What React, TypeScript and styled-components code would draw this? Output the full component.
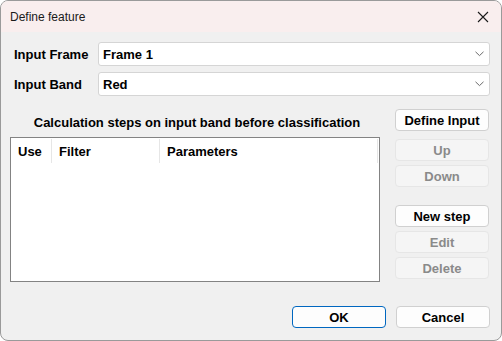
import styled, { createGlobalStyle } from "styled-components";

const GlobalStyle = createGlobalStyle`
  html, body {
    margin: 0;
    padding: 0;
    background: #ffffff;
  }
  * {
    box-sizing: border-box;
  }
`;

const columns = [
  { title: "Use", width: 41 },
  { title: "Filter", width: 108 },
  { title: "Parameters", width: 218 },
];

function Chevron() {
  return (
    <svg width="9" height="6" viewBox="0 0 9 6">
      <path d="M0.5 0.8 L4.5 4.6 L8.5 0.8" fill="none" stroke="#6a6a6a" strokeWidth="1" />
    </svg>
  );
}

function CloseIcon() {
  return (
    <svg width="12" height="12" viewBox="0 0 12 12">
      <path d="M1 1 L11 11 M11 1 L1 11" stroke="#1a1a1a" strokeWidth="1.1" fill="none" />
    </svg>
  );
}

export default function App() {
  return (
    <>
      <GlobalStyle />
      <Window>
        <TitleBar>
          <Title>Define feature</Title>
          <CloseButton>
            <CloseIcon />
          </CloseButton>
        </TitleBar>

        <Body>
          <FieldRow>
            <Label>Input Frame</Label>
            <Combo>
              <ComboText>Frame 1</ComboText>
              <Chevron />
            </Combo>
          </FieldRow>
          <FieldRow>
            <Label>Input Band</Label>
            <Combo>
              <ComboText>Red</ComboText>
              <Chevron />
            </Combo>
          </FieldRow>

          <Main>
            <StepsColumn>
              <Heading>Calculation steps on input band before classification</Heading>
              <ListBox>
                <HeaderRow>
                  {columns.map((c) => (
                    <HeaderCell key={c.title} style={{ width: c.width }}>
                      {c.title}
                    </HeaderCell>
                  ))}
                </HeaderRow>
              </ListBox>
            </StepsColumn>

            <ButtonColumn>
              <Button>Define Input</Button>
              <ButtonGroup>
                <Button disabled>Up</Button>
                <Button disabled>Down</Button>
              </ButtonGroup>
              <ButtonGroup $top={18}>
                <Button>New step</Button>
                <Button disabled>Edit</Button>
                <Button disabled>Delete</Button>
              </ButtonGroup>
            </ButtonColumn>
          </Main>

          <Footer>
            <Button $primary>OK</Button>
            <Button>Cancel</Button>
          </Footer>
        </Body>
      </Window>
    </>
  );
}

const Window = styled.div`
  width: 502px;
  height: 341px;
  display: flex;
  flex-direction: column;
  background: #f0f0f0;
  border: 1px solid #9a9a9a;
  border-radius: 8px;
  overflow: hidden;
  font-family: "Liberation Sans", Arial, sans-serif;
  color: #000000;
`;

const TitleBar = styled.div`
  height: 31px;
  display: flex;
  align-items: center;
  justify-content: space-between;
  padding: 0 12px 0 9px;
  background: #f9eeee;
`;

const Title = styled.span`
  font-size: 12px;
  color: #1a1a1a;
`;

const CloseButton = styled.div`
  display: flex;
  align-items: center;
  padding-top: 1px;
`;

const Body = styled.div`
  flex: 1;
  display: flex;
  flex-direction: column;
  padding: 10px 11px 0 9px;
`;

const FieldRow = styled.div`
  display: flex;
  align-items: center;
  height: 24px;
  margin-bottom: 6px;
  padding-left: 4px;
`;

const Label = styled.span`
  width: 84px;
  font-size: 13px;
  font-weight: bold;
`;

const Combo = styled.div`
  flex: 1;
  height: 24px;
  display: flex;
  align-items: center;
  justify-content: space-between;
  padding: 0 5px 0 4px;
  background: #ffffff;
  border: 1px solid #d5d5d5;
  border-radius: 3px;
`;

const ComboText = styled.span`
  font-size: 13px;
  font-weight: bold;
`;

const Main = styled.div`
  display: flex;
  gap: 15px;
  margin-top: 7px;
`;

const StepsColumn = styled.div`
  width: 370px;
  display: flex;
  flex-direction: column;
`;

const Heading = styled.div`
  height: 28px;
  display: flex;
  align-items: center;
  justify-content: center;
  padding-left: 4px;
  padding-bottom: 2px;
  font-size: 13px;
  font-weight: bold;
`;

const ListBox = styled.div`
  height: 145px;
  background: #ffffff;
  border: 1px solid #838383;
`;

const HeaderRow = styled.div`
  display: flex;
  height: 25px;
  padding-top: 1px;
`;

const HeaderCell = styled.div`
  display: flex;
  align-items: center;
  padding-left: 7px;
  font-size: 13px;
  font-weight: bold;
  border-right: 1px solid #e6e6e6;
`;

const ButtonColumn = styled.div`
  width: 94px;
  display: flex;
  flex-direction: column;
  gap: 8px;
`;

const ButtonGroup = styled.div<{ $top?: number }>`
  display: flex;
  flex-direction: column;
  gap: 4px;
  margin-top: ${(p) => (p.$top ? p.$top - 8 : 0)}px;
`;

const Button = styled.button<{ $primary?: boolean }>`
  width: 94px;
  height: 22px;
  padding: 0;
  font-family: "Liberation Sans", Arial, sans-serif;
  font-size: 13px;
  font-weight: bold;
  color: #000000;
  background: #fdfdfd;
  border: 1px solid ${(p) => (p.$primary ? "#0067c0" : "#d0d0d0")};
  border-radius: 4px;

  &:disabled {
    color: #8a8a8a;
    background: #f5f5f5;
    border-color: #e6e6e6;
  }
`;

const Footer = styled.div`
  display: flex;
  justify-content: flex-end;
  gap: 10px;
  margin-top: 24px;
`;
